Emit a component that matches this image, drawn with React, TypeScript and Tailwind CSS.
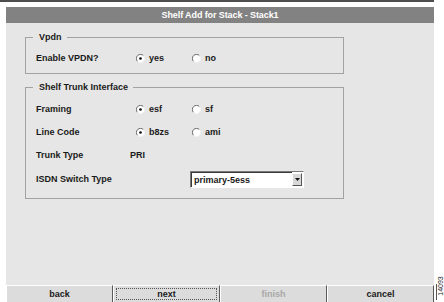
import React from 'react';

function Radio({ checked, label }: { checked?: boolean; label: string }) {
  return (
    <span className="flex items-center">
      <svg width="9" height="9" viewBox="0 0 12 12" className="shrink-0">
        <circle cx="6" cy="6" r="5" fill="#ffffff" />
        <path d="M2.11 9.89 A5.5 5.5 0 0 1 9.89 2.11" fill="none" stroke="#6a6a6a" strokeWidth="1.3" />
        <path d="M9.89 2.11 A5.5 5.5 0 0 1 2.11 9.89" fill="none" stroke="#f4f4f4" strokeWidth="1.3" />
        {checked && <circle cx="6" cy="6" r="1.8" fill="#111111" />}
      </svg>
      <span className="ml-[4px]">{label}</span>
    </span>
  );
}

function Row({ label, children, h = 'h-[14px]' }: { label: string; children: React.ReactNode; h?: string }) {
  return (
    <div className={`flex items-center ${h}`}>
      <span className="w-[100px] shrink-0">{label}</span>
      {children}
    </div>
  );
}

function Button({ label, focused, disabled }: { label: string; focused?: boolean; disabled?: boolean }) {
  return (
    <div className="flex-1 h-full bg-[#dcdcdc] border-t border-l border-t-white border-l-white border-r border-r-[#5a5a5a] p-[2px]">
      <div
        className={`h-full flex items-center justify-center border border-dotted ${
          focused ? 'border-[#555555]' : 'border-transparent'
        } ${disabled ? 'text-[#a8a8a8]' : 'text-[#1a1a1a]'}`}
      >
        {label}
      </div>
    </div>
  );
}

export default function App() {
  return (
    <div className="relative w-[444px] h-[302px] bg-white overflow-hidden font-['Liberation_Sans',Arial,sans-serif] text-[9px] font-bold text-[#1a1a1a] leading-[11px]">
      <div className="w-[434px] h-[2px] bg-[#4e4e4e]" />
      <div className="ml-[6px] mt-[5px] w-[428px] h-[295px] bg-[#e6e6e6] flex flex-col">
        <div className="h-[16px] bg-[#828282] text-white flex items-center justify-center text-[9px] tracking-[-0.1px]">
          Shelf Add for Stack - Stack1
        </div>

        <div className="pl-[19px]">
          <fieldset className="mt-[9px] w-[319px] border border-[#a2a2a2] pl-[10px] pb-[8px]">
            <legend className="ml-[-3px] pl-[6px] pr-[5px]">Vpdn</legend>
            <div className="pt-[8px]">
              <Row label="Enable VPDN?">
                <span className="w-[56px]">
                  <Radio checked label="yes" />
                </span>
                <Radio label="no" />
              </Row>
            </div>
          </fieldset>

          <fieldset className="mt-[8px] w-[319px] border border-[#a2a2a2] pl-[10px] pb-[10px]">
            <legend className="ml-[-3px] pl-[6px] pr-[5px]">Shelf Trunk Interface</legend>
            <div className="pt-[9px] flex flex-col gap-[9px]">
              <Row label="Framing">
                <span className="w-[56px]">
                  <Radio checked label="esf" />
                </span>
                <Radio label="sf" />
              </Row>
              <Row label="Line Code">
                <span className="w-[56px]">
                  <Radio checked label="b8zs" />
                </span>
                <Radio label="ami" />
              </Row>
              <div className="flex items-center h-[14px]">
                <span className="w-[94px] shrink-0">Trunk Type</span>
                <span>PRI</span>
              </div>
              <div className="flex items-center h-[17px]">
                <span className="w-[154px] shrink-0">ISDN Switch Type</span>
                <div className="w-[114px] h-[17px] bg-white border border-t-[#7a7a7a] border-l-[#7a7a7a] border-b-white border-r-white flex items-center">
                  <div className="flex-1 h-full flex items-center pl-[2px] border-t border-l border-t-[#3a3a3a] border-l-[#3a3a3a] border-transparent">
                    primary-5ess
                  </div>
                  <div className="w-[10px] h-[13px] mr-[1px] bg-[#d8d8d8] border border-t-white border-l-white border-b-[#555555] border-r-[#555555] flex items-center justify-center">
                    <svg width="5" height="3" viewBox="0 0 5 3">
                      <path d="M0 0 H5 L2.5 3 Z" fill="#111111" />
                    </svg>
                  </div>
                </div>
              </div>
            </div>
          </fieldset>
        </div>

        <div className="mt-auto h-[17px] flex">
          <Button label="back" />
          <Button label="next" focused />
          <Button label="finish" disabled />
          <Button label="cancel" />
        </div>
      </div>

      <div className="absolute left-[436px] top-[284px] w-px h-[16px] bg-[#555555]" />
      <div className="absolute left-[437px] top-[272px] w-[8px] h-[28px] flex items-center justify-center">
        <span className="-rotate-90 whitespace-nowrap text-[7px] font-normal leading-[8px] text-[#222222]">
          14093
        </span>
      </div>
    </div>
  );
}
